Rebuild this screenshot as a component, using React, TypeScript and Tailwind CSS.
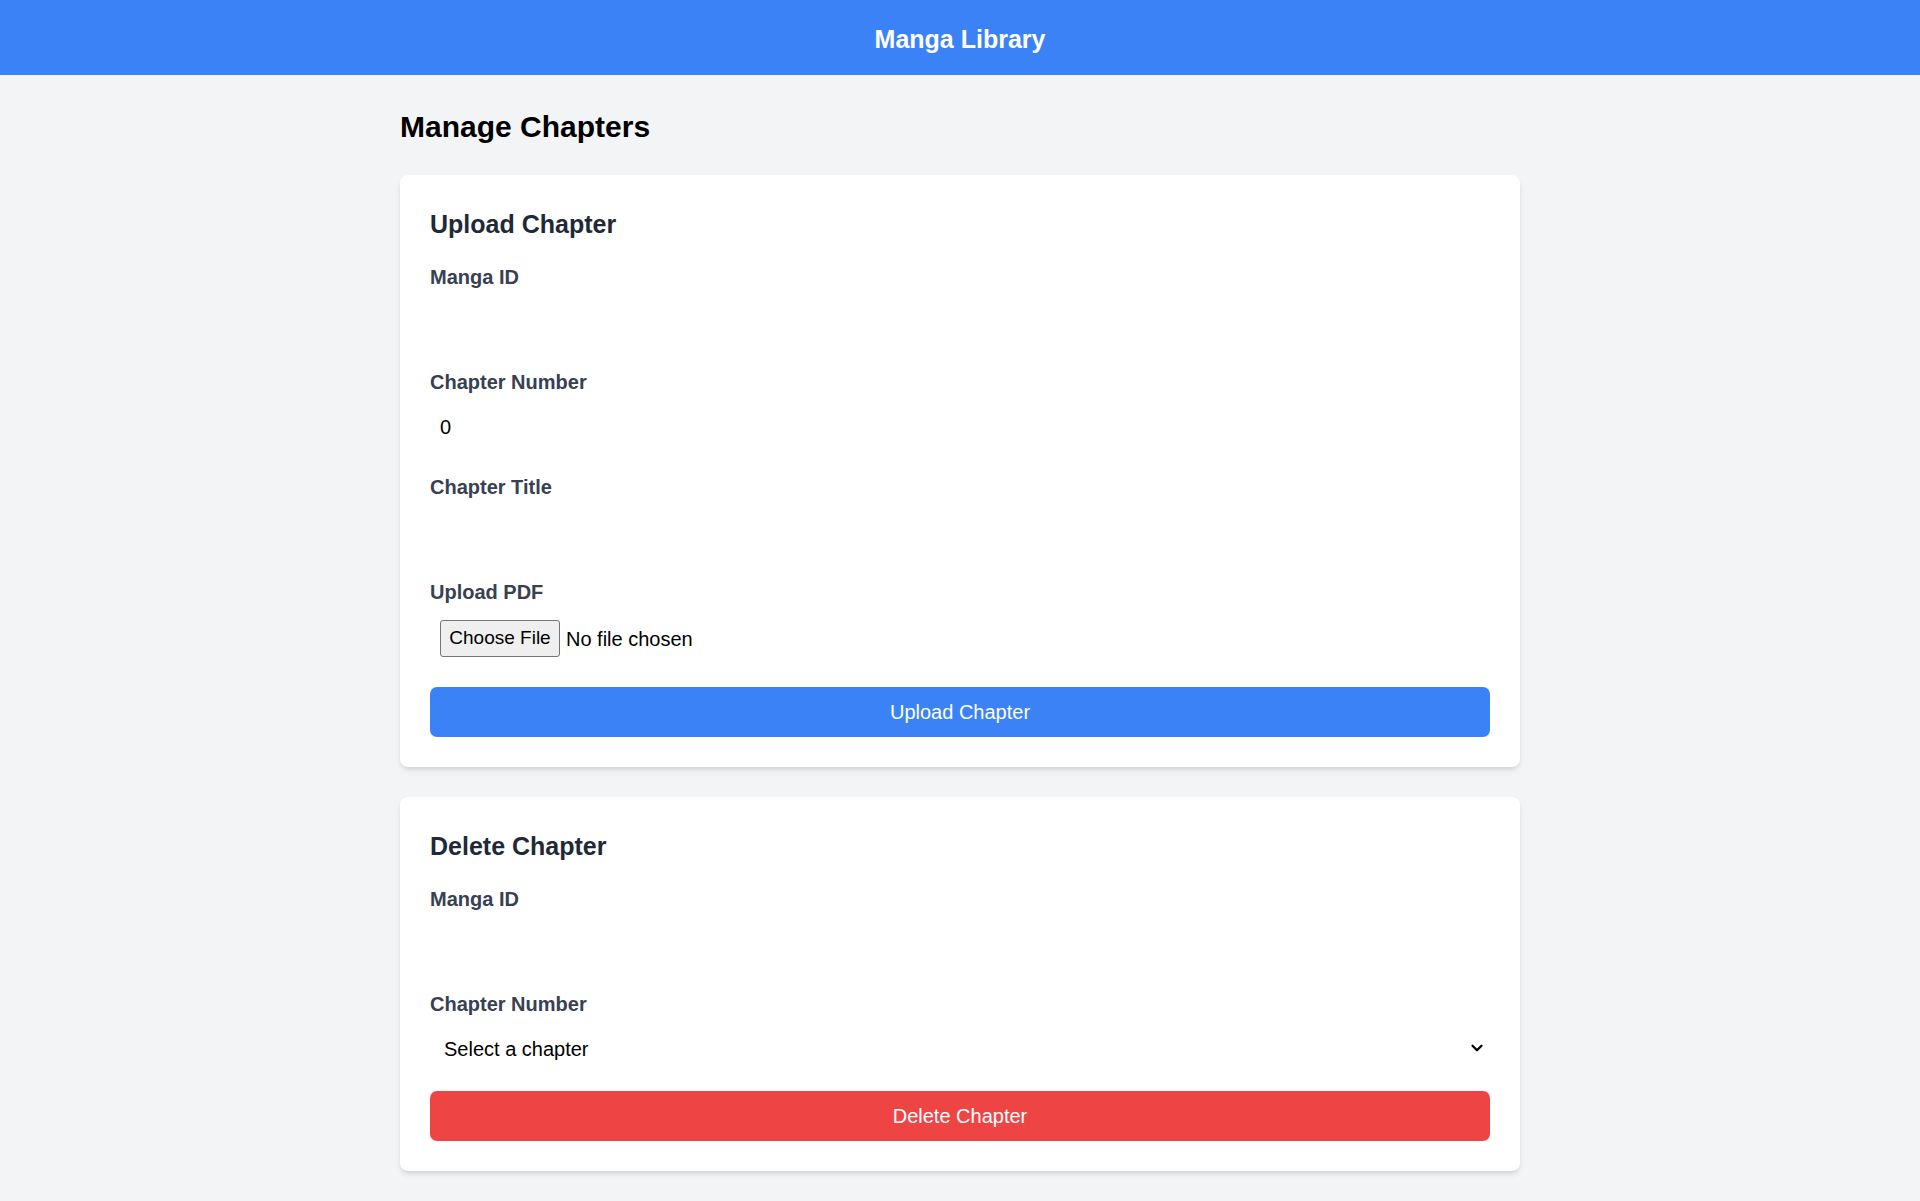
import React from "react";
import { ChevronDown } from "lucide-react";

const font = { fontFamily: '"Liberation Sans", Arial, sans-serif' };

const Label = ({ children }: { children: React.ReactNode }) => (
  <label className="block pt-[2px] mb-[8px] text-[20px] leading-[30px] font-bold text-[#374151]">
    {children}
  </label>
);

const Field = ({ label, children }: { label: string; children?: React.ReactNode }) => (
  <div className="mb-[20px]">
    <Label>{label}</Label>
    {children ?? <input type="text" className="block w-full h-[45px] px-[10px] text-[20px] outline-none bg-transparent" />}
  </div>
);

const Card = ({ title, children }: { title: string; children: React.ReactNode }) => (
  <section className="bg-white rounded-[8px] shadow-md p-[30px] mb-[30px]">
    <h2 className="pt-[2px] mb-[18px] text-[25px] leading-[35px] font-bold text-[#1f2937]">{title}</h2>
    {children}
  </section>
);

export default function App() {
  return (
    <div className="min-h-screen bg-[#f3f4f6] text-black" style={font}>
      <header className="h-[75px] pt-[4px] bg-[#3b82f6] flex items-center justify-center">
        <h1 className="text-[25px] leading-[35px] font-bold text-white">Manga Library</h1>
      </header>

      <main className="max-w-[1120px] mx-auto pt-[30px]">
        <h1 className="pt-[2px] mb-[28px] text-[30px] leading-[40px] font-bold">Manage Chapters</h1>

        <Card title="Upload Chapter">
          <Field label="Manga ID" />
          <Field label="Chapter Number">
            <input
              type="number"
              defaultValue={0}
              className="block w-full h-[45px] px-[10px] text-[20px] outline-none bg-transparent [appearance:textfield]"
            />
          </Field>
          <Field label="Chapter Title" />
          <div className="mb-[21px]">
            <Label>Upload PDF</Label>
            <div className="h-[51px] px-[10px] pt-[5px] flex items-start">
              <button
                type="button"
                className="w-[120px] h-[37px] bg-[#efefef] border border-[#767676] rounded-[3px] text-[19px] text-black flex items-center justify-center"
              >
                Choose File
              </button>
              <span className="ml-[6px] h-[37px] flex items-center text-[20px] text-black">No file chosen</span>
            </div>
          </div>
          <button className="w-full h-[50px] rounded-[7px] bg-[#3b82f6] text-white text-[20px]">Upload Chapter</button>
        </Card>

        <Card title="Delete Chapter">
          <Field label="Manga ID" />
          <Field label="Chapter Number">
            <div className="relative h-[44px]">
              <select className="appearance-none w-full h-[44px] pl-[14px] pr-[30px] text-[20px] text-black bg-transparent outline-none">
                <option>Select a chapter</option>
              </select>
              <ChevronDown
                className="absolute right-[4px] top-[12px] w-[18px] h-[18px] text-black pointer-events-none"
                strokeWidth={3}
              />
            </div>
          </Field>
          <button className="w-full h-[50px] rounded-[7px] bg-[#ef4444] text-white text-[20px]">Delete Chapter</button>
        </Card>
      </main>
    </div>
  );
}
